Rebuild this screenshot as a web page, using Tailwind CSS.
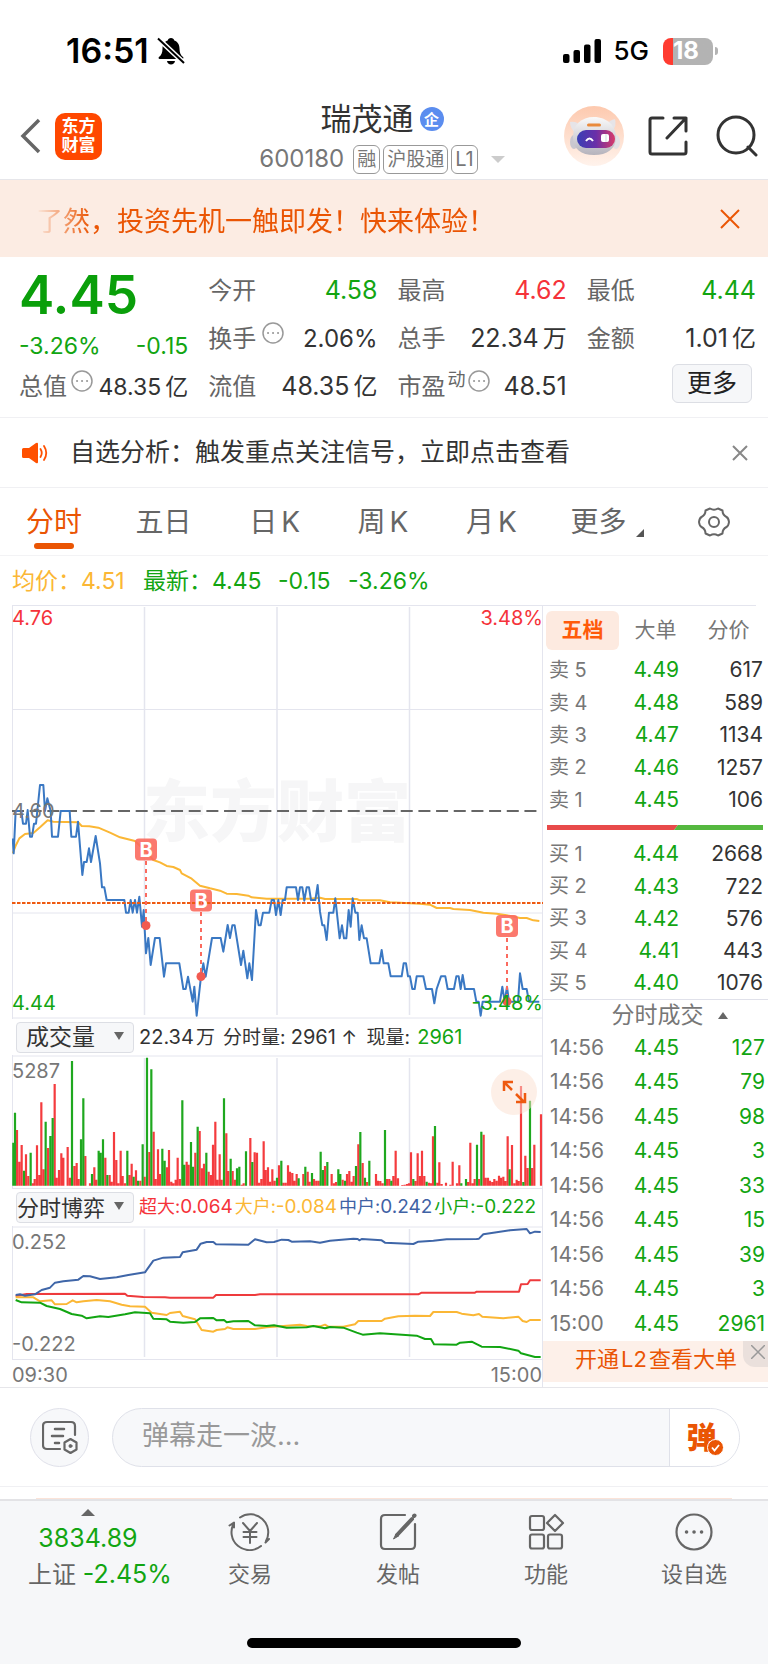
<!DOCTYPE html>
<html lang="zh-CN">
<head>
<meta charset="utf-8">
<meta name="viewport" content="width=device-width, initial-scale=1">
<title>瑞茂通 600180</title>
<script src="https://cdn.jsdelivr.net/npm/@tailwindcss/browser@4"></script>
</head>
<body class="min-h-screen bg-white font-['Inter','Noto_Sans_CJK_SC',sans-serif] text-[#333]">
<div class="flex min-h-screen flex-col">

<!-- status bar -->
<div class="flex h-[100px] items-center justify-between pt-0.5 pr-[50px] pl-[66px] text-black">
  <div class="flex items-center gap-2">
    <span class="text-[34px] leading-none font-semibold">16:51</span>
    <svg class="size-7" viewBox="0 0 28 28" aria-label="静音"><path d="M14 1c1.800 0 3 1 3.300 2.400C21 4.800 22.500 8 22.500 11.500c0 4 1 6.500 3.500 8.500.8.7.5 2-.8 2H2.800c-1.300 0-1.600-1.300-.8-2 2.500-2 3.500-4.500 3.500-8.500C5.500 8 7 4.800 10.700 3.400 11 2 12.200 1 14 1zM10 24h8c-.3 2.200-1.900 3.500-4 3.500S10.300 26.200 10 24z"/><path d="M1 1.500 27 26" stroke="#fff" stroke-width="5"/><path d="M1 1.500 27 26" stroke="#000" stroke-width="2"/></svg>
  </div>
  <div class="flex items-center">
    <svg class="h-6 w-[38px]" viewBox="0 0 38 24" aria-label="信号"><rect y="15" width="6.500" height="9" rx="2"/><rect x="10.500" y="11" width="6.500" height="13" rx="2"/><rect x="21" y="5.500" width="6.500" height="18.500" rx="2"/><rect x="31.500" width="6.500" height="24" rx="2"/></svg>
    <span class="ml-3 text-[26px] leading-none font-medium">5G</span>
    <div class="ml-3.5 flex h-[27px] w-[50px] items-center overflow-hidden rounded-lg bg-linear-to-r from-[#ff3b30] from-20% to-[#b3b3b3] to-20% pl-2.5 text-[24px] font-bold text-white">18</div>
    <div class="ml-0.5 h-2 w-[3px] rounded-r bg-[#b3b3b3]"></div>
  </div>
</div>

<!-- title bar -->
<header class="grid h-20 grid-cols-[1fr_auto_1fr] items-center border-b border-[#e6e6ea]">
  <div class="flex items-center gap-3.5 pb-2 pl-5">
    <button aria-label="返回"><svg class="h-9 w-[21px]" viewBox="0 0 21 36" fill="none" stroke="#666" stroke-width="3.500"><path d="M19 2 3 18l16 16"/></svg></button>
    <a href="#" class="flex size-[47px] flex-col items-center justify-center rounded-[10px] bg-[#ff4800] text-[17px] leading-[19px] font-bold text-white"><span>东方</span><span>财富</span></a>
  </div>
  <div class="flex flex-col items-center pr-1">
    <div class="flex items-center gap-1.5"><h1 class="text-[31px] leading-[38px]">瑞茂通</h1><span class="flex size-6 items-center justify-center rounded-full bg-[#5b8def] text-[15px] leading-none font-bold text-white">企</span></div>
    <div class="flex h-[42px] items-center gap-[3px] text-[#777]">
      <span class="mr-1.5 text-[24px]">600180</span>
      <span class="rounded-md border border-[#999] px-[3px] text-[19px] leading-[27px]">融</span>
      <span class="rounded-md border border-[#999] px-[3px] text-[19px] leading-[27px]">沪股通</span>
      <span class="rounded-md border border-[#999] px-[3px] text-[20px] leading-[27px]">L1</span>
      <svg class="ml-2.5 h-[7px] w-3.5" viewBox="0 0 14 7"><path d="M0 0h14L7 7z" fill="#ccc"/></svg>
    </div>
  </div>
  <div class="flex items-center justify-end pr-2.5 pb-2">
    <button class="mr-6" aria-label="智能助手"><svg class="size-[60px]" viewBox="0 0 60 60">
      <defs><linearGradient id="halo" x1="0" y1="0" x2="0" y2="1"><stop offset="0" stop-color="#fdc9ae"/><stop offset="1" stop-color="#fff3ec"/></linearGradient><linearGradient id="visor"><stop offset="0" stop-color="#3a3fb5"/><stop offset=".5" stop-color="#6a2fa8"/><stop offset="1" stop-color="#d83a6a"/></linearGradient><linearGradient id="shell" x1="0" y1="0" x2="0" y2="1"><stop offset="0" stop-color="#fafafa"/><stop offset="1" stop-color="#b5b3bc"/></linearGradient></defs>
      <circle cx="30" cy="30" r="30" fill="url(#halo)"/><path d="M6 16q5-1 9 2l-3 9q-6-4-6-11zM51 13q-5 1-8 5l5 7q5-5 3-12z" fill="#e6e4e8"/><ellipse cx="10" cy="36" rx="4" ry="7" fill="#c9c7cf"/><ellipse cx="52" cy="36" rx="4" ry="7" fill="#e3e0e5"/><path d="M30 11c13 0 22 9 22 20 0 12-9 18-22 18S9 43 9 31s8-20 21-20z" fill="url(#shell)"/><rect x="23" y="17.500" width="14" height="3" rx="1.500" fill="#e98a3c"/><rect x="13" y="24" width="38" height="18" rx="9" fill="url(#visor)"/><path d="M22 35q3.500-5 7 0" fill="none" stroke="#fff" stroke-width="2"/><rect x="37" y="28" width="8" height="8" rx="2" fill="#fff"/><path d="M42 28v8" stroke="#cdd" stroke-width="1"/></svg></button>
    <button class="mr-7" aria-label="分享"><svg class="size-10" viewBox="0 0 40 40" fill="none" stroke="#333" stroke-width="3" stroke-linecap="round" stroke-linejoin="round"><path d="M15 2H4Q2 2 2 4v32q0 2 2 2h32q2 0 2-2V26M26 2h12v13M38 2 19 22"/></svg></button>
    <button aria-label="搜索"><svg class="size-[42px]" viewBox="0 0 42 42" fill="none" stroke="#333" stroke-width="3" stroke-linecap="round"><circle cx="20" cy="20" r="18"/><path d="m32 32 8 8"/></svg></button>
  </div>
</header>

<!-- promo banner -->
<div class="flex h-[77px] items-center justify-between bg-[#fcece3] pr-7 pl-9 text-[#ea5504]">
  <p class="pt-2 text-[27px] [mask-image:linear-gradient(to_right,transparent,black_54px)]">了然，投资先机一触即发！快来体验！</p>
  <button aria-label="关闭"><svg class="size-5" viewBox="0 0 20 20" fill="none" stroke="currentColor" stroke-width="2"><path d="m1 1 18 18M19 1 1 19"/></svg></button>
</div>

<!-- quote summary -->
<section class="grid h-[161px] grid-cols-4 gap-x-5 border-b border-[#f0f0f3] pt-2.5 pr-3 pl-[19px] text-[24px] text-[#666]">
  <div class="flex flex-col">
    <div class="h-14 text-[53px] leading-14 font-semibold text-[#0a9f0a]">4.45</div>
    <div class="flex h-[46px] items-center justify-between text-[23px] text-[#12a512]"><span>-3.26%</span><span>-0.15</span></div>
    <div class="flex h-9 items-center"><span>总值</span><svg class="mb-3 ml-1 size-[22px] shrink-0" viewBox="0 0 22 22" fill="none" stroke="#999" stroke-width="1.500"><circle cx="11" cy="11" r="10"/><path d="M6 11h.1M11 11h.1M16 11h.1" stroke-width="2" stroke-linecap="round"/></svg><span class="ml-auto text-[23px] whitespace-nowrap text-[#333]">48.35<span class="ml-1">亿</span></span></div>
  </div>
  <div class="flex flex-col">
    <div class="flex h-12 items-center justify-between"><span>今开</span><span class="text-[25px] text-[#12a512]">4.58</span></div>
    <div class="flex h-12 items-center"><span>换手</span><svg class="mb-3 ml-1.5 size-[22px]" viewBox="0 0 22 22" fill="none" stroke="#999" stroke-width="1.500"><circle cx="11" cy="11" r="10"/><path d="M6 11h.1M11 11h.1M16 11h.1" stroke-width="2" stroke-linecap="round"/></svg><span class="ml-auto text-[#333]">2.06%</span></div>
    <div class="flex h-12 items-center justify-between"><span>流值</span><span class="text-[25px] text-[#333]">48.35<span class="ml-1 text-[24px]">亿</span></span></div>
  </div>
  <div class="flex flex-col">
    <div class="flex h-12 items-center justify-between"><span>最高</span><span class="text-[25px] text-[#f5333a]">4.62</span></div>
    <div class="flex h-12 items-center justify-between"><span>总手</span><span class="text-[25px] text-[#333]">22.34<span class="ml-1 text-[24px]">万</span></span></div>
    <div class="flex h-12 items-center"><span>市盈</span><span class="mb-4 ml-0.5 text-[18px]">动</span><svg class="mb-3 ml-0.5 size-[22px]" viewBox="0 0 22 22" fill="none" stroke="#999" stroke-width="1.500"><circle cx="11" cy="11" r="10"/><path d="M6 11h.1M11 11h.1M16 11h.1" stroke-width="2" stroke-linecap="round"/></svg><span class="ml-auto text-[25px] text-[#333]">48.51</span></div>
  </div>
  <div class="flex flex-col">
    <div class="flex h-12 items-center justify-between"><span>最低</span><span class="text-[25px] text-[#12a512]">4.44</span></div>
    <div class="flex h-12 items-center justify-between"><span>金额</span><span class="text-[25px] text-[#333]">1.01<span class="ml-1 text-[24px]">亿</span></span></div>
    <button class="mt-px mr-1 h-[39px] w-20 self-end rounded-md border border-[#dcdee4] bg-[#f6f7f9] text-[25px] leading-none text-[#222]">更多</button>
  </div>
</section>

<!-- analysis hint -->
<div class="flex h-[70px] items-center border-b border-[#f0f0f3] pr-5 pl-[22px]">
  <svg class="h-[22px] w-[26px]" viewBox="0 0 26 22" aria-hidden="true"><path d="M1.500 6H7l7-5q2-1 2 1v18q0 2-2 1l-7-5H1.500Q0 16 0 14.500v-7Q0 6 1.500 6z" fill="#ff5000"/><path d="M18.500 7q2.500 4 0 8M22 4q4.500 7 0 14" fill="none" stroke="#ff5000" stroke-width="1.800" stroke-linecap="round"/></svg>
  <p class="ml-[22px] text-[25px]">自选分析：触发重点关注信号，立即点击查看</p>
  <button class="ml-auto" aria-label="关闭"><svg class="size-4" viewBox="0 0 16 16" fill="none" stroke="#888" stroke-width="2"><path d="m1 1 14 14M15 1 1 15"/></svg></button>
</div>

<!-- period tabs -->
<nav class="flex h-[68px] items-center justify-between border-b border-[#f3f3f5] pr-[38px] pl-[26px] text-[28px] text-[#666]">
  <button class="relative text-[#ea5504]">分时<span class="absolute inset-x-2 -bottom-1.5 h-1.5 rounded-full bg-[#ea5504]"></span></button>
  <button>五日</button>
  <button class="ml-1">日<span class="ml-1">K</span></button>
  <button class="ml-1">周<span class="ml-1">K</span></button>
  <button class="ml-1">月<span class="ml-1">K</span></button>
  <button class="flex items-end gap-2.5">更多<svg class="mb-1.5 size-2" viewBox="0 0 8 8"><path d="M8 0v8H0z" fill="#555"/></svg></button>
  <button aria-label="设置"><svg class="size-8" viewBox="0 0 32 32" fill="none" stroke="#666" stroke-width="2" stroke-linejoin="round"><path d="M12 2.500q4 2.500 8 0l4.500 2q0 4.500 4 6.500 2 1 2.500 5-.5 4-2.500 5-4 2-4 6.500l-4.500 2q-4-2.500-8 0l-4.500-2q0-4.500-4-6.500Q1.500 20 1 16q.5-4 2.500-5 4-2 4-6.500z"/><circle cx="16" cy="16" r="5"/></svg></button>
</nav>

<!-- average / latest -->
<div class="flex h-[49px] items-center pt-0.5 pl-3 text-[23px] whitespace-pre">
  <span class="w-[131px] text-[#fbb735]">均价：4.51</span>
  <span class="w-[135px] text-[#12a512]">最新：4.45</span>
  <span class="w-[70px] text-[#12a512]">-0.15</span>
  <span class="text-[#12a512]">-3.26%</span>
</div>

<!-- charts and order book -->
<main class="flex border-b border-[#e6e6ea] pl-3 text-[20px] text-[#777]">
  <div class="flex min-w-0 flex-1 flex-col">

    <div class="relative leading-none">
      <svg class="block w-full" viewBox="0 0 531 414" fill="none" role="img" aria-label="分时走势">
        <text x="131" y="231" font-size="67" font-weight="900" fill="#f6f6f7">东方财富</text>
        <path d="M0 .5H531M0 104.500H531M0 308H531M0 413H531M.5 0V414M530.500 0V414" stroke="#e4e5ee"/>
        <path d="M132.500 2V410M265 2V410M397.500 2V410" stroke="#e4e5ee" stroke-width="1.500"/>
        <path d="M0 206H529" stroke="#666" stroke-width="2" stroke-dasharray="12 5.670"/>
        <g transform="translate(-12 125) scale(.33333)" stroke-linejoin="round">
          <path stroke="#fbb735" stroke-width="6" d="M38 370 48 345 58 325 75 312 100 309 120 292 143 271 160 275 235 277 245 288 268 289 295 293 330 308 360 322 405 333 435 362 460 390 480 397 500 408 520 411 540 420 545 430 575 446 600 467 630 475 660 482 680 491 710 492 745 497 755 502 800 506 930 506 960 503 975 507 1070 507 1080 511 1140 511 1170 517 1260 521 1290 524 1310 534 1350 534 1360 537 1410 540 1450 548 1490 551 1520 556 1560 564 1580 564 1600 571 1618 573"/>
          <path stroke="#3a78c3" stroke-width="6" d="M38 325 41 370 47 243 64 243 69 281 78 281 83 240 90 320 96 320 102 281 108 281 120 165 130 165 135 243 142 205 152 243 156 320 174 320 182 243 209 243 214 320 228 320 234 275 247 435 252 396 260 396 267 355 273 396 287 318 300 400 306 472 313 472 320 510 373 510 378 548 386 548 392 510 398 548 405 510 411 548 418 500 426 590 431 540 438 670 445 624 452 705 465 624 479 624 492 740 498 700 538 700 550 777 557 777 564 740 578 815 583 770 590 857 603 740 610 700 617 740 636 624 662 624 670 665 683 585 690 624 697 586 704 586 723 705 730 662 742 745 748 700 756 750 768 540 776 586 782 586 789 548 808 548 815 510 822 510 828 555 835 510 842 555 848 510 855 510 860 472 888 472 894 510 900 472 907 472 913 512 920 472 927 472 933 510 946 510 953 465 960 545 967 586 973 586 980 630 987 548 1000 548 1006 505 1019 625 1026 586 1032 625 1039 625 1046 540 1052 590 1058 505 1066 548 1073 548 1078 630 1085 586 1092 625 1100 625 1112 700 1138 700 1145 660 1151 700 1165 700 1172 739 1205 739 1211 700 1218 700 1224 739 1230 739 1237 777 1244 777 1250 739 1270 739 1278 777 1296 777 1303 820 1310 777 1323 739 1336 739 1343 777 1362 777 1369 739 1376 739 1382 777 1388 735 1395 777 1422 777 1429 815 1436 815 1442 857 1448 815 1500 815 1507 770 1514 815 1521 770 1527 815 1554 815 1560 730 1568 777 1580 777 1587 815 1618 815"/>
        </g>
        <g fill="#fb6a5e" fill-opacity=".9" stroke="none"><rect x="123" y="233.500" width="22" height="22" rx="4"/><rect x="178" y="284.500" width="22" height="22" rx="4"/><rect x="484" y="310" width="22" height="22" rx="4"/></g>
        <path d="M0 298H531" stroke="#ee5a10" stroke-width="2" stroke-dasharray="3.500 1.500"/>
        <path d="M134 256V320M189 307V371M495 333V396" stroke="#fb6a5e" stroke-width="2" stroke-dasharray="4 4"/>
        <g fill="#f25a50"><circle cx="134" cy="320.500" r="4.500"/><circle cx="189" cy="371.500" r="4.500"/><circle cx="495" cy="396.500" r="4.500"/></g>
        <g fill="#fff" font-size="20" font-weight="700" text-anchor="middle"><text x="134" y="252">B</text><text x="189" y="303">B</text><text x="495" y="328">B</text></g>
      </svg>
      <span class="absolute top-[3px] left-0 text-[#f5333a]">4.76</span>
      <span class="absolute top-[3px] right-0 text-[#f5333a]">3.48%</span>
      <span class="absolute top-[47%] left-0 mt-px">4.60</span>
      <span class="absolute bottom-1.5 left-0 text-[#12a512]">4.44</span>
      <span class="absolute right-0 bottom-1.5 text-[#12a512]">-3.48%</span>
    </div>

    <div class="flex h-9 items-center border-r border-[#e4e5ee] pl-1 whitespace-nowrap text-[#333]">
      <div class="relative">
        <select aria-label="副图指标一" class="block h-[31px] w-[118px] appearance-none rounded border border-[#dcdee4] bg-[#f6f7f9] pl-[9px] text-[23px] leading-none"><option>成交量</option></select>
        <svg class="pointer-events-none absolute top-2.5 right-2.5 h-2 w-2.5" viewBox="0 0 10 8"><path d="M0 0h10L5 8z" fill="#666"/></svg>
      </div>
      <p class="ml-[5px] text-[19px]"><span class="text-[20px]">22.34</span><span class="ml-0.5">万</span><span class="ml-2">分时量:</span> <span class="text-[20px]">2961</span> ↑ <span class="ml-1">现量:</span> <span class="ml-0.5 text-[20px] text-[#12a512]">2961</span></p>
    </div>

    <div class="relative leading-none">
      <svg class="block w-full" viewBox="0 0 531 134" fill="none" role="img" aria-label="成交量">
        <path d="M0 1H531M0 133.500H531M.5 0V134M530.500 0V134" stroke="#e4e5ee"/>
        <path d="M132.500 3V131M265 3V131M397.500 3V131" stroke="#e4e5ee" stroke-width="1.500"/>
        <g transform="translate(-12 -45) scale(.33333)" stroke-width="6.600">
          <path stroke="#f43b3e" d="M51 527V360M58 527V455M65 527V405M78 527V433M85 527V498M98 527V520M104 527V507M111 527V406M118 527V495M124 527V277M131 527V478M144 527V414M164 527V222M170 527V503M177 527V480M184 527V430M190 527V443M203 527V411M210 527V503M223 527V468M230 527V459M236 527V507M256 527V438M270 527V520M283 527V472M289 527V509M316 527V443M329 527V495M335 527V515M342 527V366M349 527V450M355 527V520M362 527V422M368 527V498M375 527V520M388 527V495M395 527V461M408 527V481M421 527V512M434 527V500M448 527V426M461 527V365M467 527V507M474 527V418M480 527V492M501 527V472M507 527V420M514 527V515M520 527V520M527 527V509M533 527V443M540 527V507M560 527V455M566 527V464M586 527V428M599 527V363M606 527V475M612 527V461M626 527V485M633 527V495M639 527V404M646 527V335M652 527V509M659 527V433M665 527V509M679 527V370M685 527V483M698 527V483M705 527V509M725 527V524M731 527V520M751 527V384M764 527V427M771 527V428M777 527V518M784 527V507M791 527V394M797 527V480M804 527V472M810 527V515M817 527V478M824 527V512M837 527V466M850 527V518M857 527V518M864 527V466M870 527V485M877 527V489M883 527V512M890 527V492M910 527V492M923 527V485M929 527V515M942 527V507M949 527V512M956 527V512M975 527V468M995 527V492M1002 527V520M1008 527V516M1028 527V509M1041 527V492M1048 527V483M1055 527V515M1061 527V498M1075 527V403M1088 527V459M1101 527V516M1128 527V492M1134 527V512M1141 527V513M1148 527V520M1161 527V507M1168 527V507M1180 527V498M1187 527V422M1194 527V505M1207 527V525M1214 527V524M1221 527V522M1227 527V520M1233 527V427M1246 527V513M1253 527V430M1260 527V498M1266 527V422M1273 527V498M1287 527V518M1293 527V520M1299 527V379M1312 527V518M1318 527V457M1325 527V522M1338 527V518M1351 527V524M1358 527V455M1371 527V520M1378 527V466M1404 527V516M1411 527V398M1418 527V520M1424 527V507M1437 527V507M1451 527V374M1457 527V503M1464 527V503M1470 527V512M1477 527V516M1483 527V507M1490 527V512M1497 527V497M1503 527V503M1510 527V500M1516 527V513M1523 527V379M1536 527V405M1543 527V520M1550 527V509M1556 527V513M1563 527V228M1576 527V437M1583 527V474M1596 527V474M1603 527V404M1623 527V313"/>
          <path stroke="#1fa81f" d="M40 527V398M45 527V308M72 527V482M92 527V428M137 527V335M151 527V378M158 527V324M216 527V153M243 527V388M250 527V265M276 527V492M296 527V422M302 527V428M309 527V388M322 527V495M382 527V422M401 527V500M414 527V512M428 527V403M441 527V143M454 527V178M487 527V416M494 527V452M547 527V271M553 527V464M573 527V396M579 527V470M593 527V350M619 527V428M672 527V265M692 527V446M711 527V475M718 527V470M738 527V424M757 527V456M831 527V503M844 527V452M896 527V505M916 527V470M936 527V489M962 527V425M969 527V480M982 527V456M1015 527V478M1021 527V492M1035 527V512M1068 527V468M1081 527V366M1095 527V503M1108 527V452M1155 527V360M1174 527V512M1240 527V507M1280 527V515M1305 527V348M1384 527V520M1398 527V507M1431 527V404M1444 527V365M1529 527V478M1570 527V516M1590 527V272"/>
        </g>
      </svg>
      <span class="absolute top-1.5 left-0">5287</span>
      <button class="absolute top-3.5 right-1.5 size-[46px] rounded-full bg-[#fbdfd0]/50" aria-label="放大"><svg class="size-[46px]" viewBox="0 0 46 46" fill="none" stroke="#ee5a10" stroke-width="2.500"><path d="M13 22V13h9M13 13l8 8M34 24v9h-9M33 33l-8-8"/></svg></button>
    </div>

    <div class="flex h-[37px] items-center border-r border-[#e4e5ee] pl-1 whitespace-nowrap">
      <div class="relative">
        <select aria-label="副图指标二" class="block h-[31px] w-[118px] appearance-none rounded border border-[#dcdee4] bg-[#f6f7f9] text-[22px] leading-none text-[#333]"><option>分时博弈</option></select>
        <svg class="pointer-events-none absolute top-2.5 right-2.5 h-2 w-2.5" viewBox="0 0 10 8"><path d="M0 0h10L5 8z" fill="#666"/></svg>
      </div>
      <p class="ml-[5px] flex flex-1 justify-between pr-1.5 text-[18px]"><span class="text-[#f5333a]">超大:<span class="text-[19px]">0.064</span></span><span class="text-[#fbb735]">大户:<span class="text-[19px]">-0.084</span></span><span class="text-[#3f62a5]">中户:<span class="text-[19px]">0.242</span></span><span class="text-[#12a512]">小户:<span class="text-[19px]">-0.222</span></span></p>
    </div>

    <div class="relative leading-none">
      <svg class="block w-full" viewBox="0 0 531 134" fill="none" role="img" aria-label="分时博弈">
        <path d="M0 1H531M0 133.500H531M.5 0V134M530.500 0V134" stroke="#e4e5ee"/>
        <path d="M132.500 3V131M265 3V131M397.500 3V131" stroke="#e4e5ee" stroke-width="1.500"/>
        <g transform="translate(-12 -216) scale(.33333)" stroke-width="6" stroke-linejoin="round">
          <path stroke="#ee3a3c" d="M47 858 80 852 375 851 382 857 430 861 495 862 510 863 640 863 648 855 765 855 780 853 1255 853 1265 848 1425 848 1430 845 1557 845 1563 823 1583 822 1590 811 1622 811"/>
          <path stroke="#fbb735" d="M47 862 100 862 120 874 155 871 165 883 200 882 218 871 230 877 250 874 290 870 330 874 365 884 390 889 435 890 455 908 500 915 510 909 540 905 548 918 585 928 605 960 640 965 650 960 675 957 682 952 700 957 765 957 800 952 850 948 900 944 920 948 960 949 975 944 985 950 1030 950 1065 943 1075 933 1145 933 1155 926 1195 919 1245 917 1290 918 1300 906 1370 906 1385 911 1420 916 1437 912 1447 920 1510 925 1555 920 1568 933 1580 936 1590 930 1622 930"/>
          <path stroke="#12a512" d="M47 870 65 877 120 878 140 888 180 897 215 912 245 917 260 925 300 919 325 921 375 913 405 907 450 910 460 926 500 928 510 935 550 938 585 936 600 925 640 924 650 931 672 930 680 937 700 934 745 933 765 946 800 948 822 946 860 953 920 952 940 948 975 955 990 951 1030 953 1070 968 1088 974 1140 970 1250 977 1275 987 1293 987 1302 1003 1370 1004 1380 998 1415 995 1445 1010 1500 1011 1555 1022 1563 1030 1605 1041 1622 1041"/>
          <path stroke="#3f66a8" d="M47 855 60 853 75 857 105 853 125 840 150 833 165 818 190 814 235 809 250 798 270 799 300 807 350 802 385 795 435 787 460 752 490 743 540 741 548 727 590 719 602 701 620 696 640 696 648 703 745 704 765 688 800 697 822 696 845 689 865 690 875 695 930 694 960 698 990 692 1060 686 1073 687 1078 691 1085 687 1145 691 1155 698 1240 702 1255 695 1300 692 1340 688 1430 687 1437 686 1450 673 1530 661 1580 657 1590 670 1605 665 1622 666"/>
        </g>
      </svg>
      <span class="absolute top-1.5 left-0">0.252</span>
      <span class="absolute bottom-1.5 left-0">-0.222</span>
    </div>

    <div class="flex h-[27px] items-center justify-between border-r border-[#e4e5ee] pt-[3px]"><span>09:30</span><span>15:00</span></div>
  </div>

  <!-- order book -->
  <aside class="flex w-[225px] flex-col text-[21px]">
    <div class="mr-3 flex h-[49px] items-center border-t border-[#e4e5ee] pl-[3px]">
      <button class="h-[39px] w-[73px] shrink-0 rounded-md bg-[#fdeae0] font-bold text-[#ff5a0a]">五档</button>
      <button class="w-[73px] shrink-0 text-center">大单</button>
      <button class="w-[73px] shrink-0 text-center">分价</button>
    </div>
    <table class="h-[162px] w-full table-fixed">
      <tbody>
        <tr><th scope="row" class="w-[66px] pl-1.5 text-left text-[20px] font-normal">卖 5</th><td class="pr-px text-right text-[#12a512]">4.49</td><td class="w-[88px] pr-[5px] text-right text-[#333]">617</td></tr>
        <tr><th scope="row" class="pl-1.5 text-left text-[20px] font-normal">卖 4</th><td class="pr-px text-right text-[#12a512]">4.48</td><td class="pr-[5px] text-right text-[#333]">589</td></tr>
        <tr><th scope="row" class="pl-1.5 text-left text-[20px] font-normal">卖 3</th><td class="pr-px text-right text-[#12a512]">4.47</td><td class="pr-[5px] text-right text-[#333]">1134</td></tr>
        <tr><th scope="row" class="pl-1.5 text-left text-[20px] font-normal">卖 2</th><td class="pr-px text-right text-[#12a512]">4.46</td><td class="pr-[5px] text-right text-[#333]">1257</td></tr>
        <tr><th scope="row" class="pl-1.5 text-left text-[20px] font-normal">卖 1</th><td class="pr-px text-right text-[#12a512]">4.45</td><td class="pr-[5px] text-right text-[#333]">106</td></tr>
      </tbody>
    </table>
    <svg class="mt-[9px] mb-2 ml-1 h-[5px] w-[216px]" viewBox="0 0 216 5"><path d="M0 0h131l-4 5H0z" fill="#e84a4a"/><path d="M131 0h85v5h-89z" fill="#55b83f"/></svg>
    <table class="h-[161px] w-full table-fixed">
      <tbody>
        <tr><th scope="row" class="w-[66px] pl-1.5 text-left text-[20px] font-normal">买 1</th><td class="pr-px text-right text-[#12a512]">4.44</td><td class="w-[88px] pr-[5px] text-right text-[#333]">2668</td></tr>
        <tr><th scope="row" class="pl-1.5 text-left text-[20px] font-normal">买 2</th><td class="pr-px text-right text-[#12a512]">4.43</td><td class="pr-[5px] text-right text-[#333]">722</td></tr>
        <tr><th scope="row" class="pl-1.5 text-left text-[20px] font-normal">买 3</th><td class="pr-px text-right text-[#12a512]">4.42</td><td class="pr-[5px] text-right text-[#333]">576</td></tr>
        <tr><th scope="row" class="pl-1.5 text-left text-[20px] font-normal">买 4</th><td class="pr-px text-right text-[#12a512]">4.41</td><td class="pr-[5px] text-right text-[#333]">443</td></tr>
        <tr><th scope="row" class="pl-1.5 text-left text-[20px] font-normal">买 5</th><td class="pr-px text-right text-[#12a512]">4.40</td><td class="pr-[5px] text-right text-[#333]">1076</td></tr>
      </tbody>
    </table>
    <button class="flex h-[31px] items-center justify-center gap-3.5 border-t border-[#e0e1ea] pr-1 pl-8 text-[23px] leading-none"><span>分时成交</span><svg class="h-[7px] w-2.5" viewBox="0 0 10 7"><path d="M5 0l5 7H0z" fill="#666"/></svg></button>
    <table class="h-[311px] w-full table-fixed">
      <tbody>
        <tr><td class="w-[70px] pl-[7px]">14:56</td><td class="pr-px text-right text-[#12a512]">4.45</td><td class="w-[88px] pr-[3px] text-right text-[#12a512]">127</td></tr>
        <tr><td class="pl-[7px]">14:56</td><td class="pr-px text-right text-[#12a512]">4.45</td><td class="pr-[3px] text-right text-[#12a512]">79</td></tr>
        <tr><td class="pl-[7px]">14:56</td><td class="pr-px text-right text-[#12a512]">4.45</td><td class="pr-[3px] text-right text-[#12a512]">98</td></tr>
        <tr><td class="pl-[7px]">14:56</td><td class="pr-px text-right text-[#12a512]">4.45</td><td class="pr-[3px] text-right text-[#12a512]">3</td></tr>
        <tr><td class="pl-[7px]">14:56</td><td class="pr-px text-right text-[#12a512]">4.45</td><td class="pr-[3px] text-right text-[#12a512]">33</td></tr>
        <tr><td class="pl-[7px]">14:56</td><td class="pr-px text-right text-[#12a512]">4.45</td><td class="pr-[3px] text-right text-[#12a512]">15</td></tr>
        <tr><td class="pl-[7px]">14:56</td><td class="pr-px text-right text-[#12a512]">4.45</td><td class="pr-[3px] text-right text-[#12a512]">39</td></tr>
        <tr><td class="pl-[7px]">14:56</td><td class="pr-px text-right text-[#12a512]">4.45</td><td class="pr-[3px] text-right text-[#12a512]">3</td></tr>
        <tr><td class="pl-[7px]">15:00</td><td class="pr-px text-right text-[#12a512]">4.45</td><td class="pr-[3px] text-right text-[#12a512]">2961</td></tr>
      </tbody>
    </table>
    <div class="relative h-[41px] bg-[#fdf0e9]">
      <a href="#" class="block pl-8 text-[22px] leading-[37px] whitespace-nowrap text-[#ea5504]">开通<span class="ml-0.5">L2</span><span class="ml-0.5">查看大单</span></a>
      <button class="absolute top-0 right-0 flex h-[26px] w-[25px] items-center justify-center rounded-bl-xl bg-[#eae0dc] pb-1 pl-1" aria-label="关闭"><svg class="size-3.5" viewBox="0 0 14 14" fill="none" stroke="#999" stroke-width="1.500"><path d="m0 0 14 14M14 0 0 14"/></svg></button>
    </div>
  </aside>
</main>

<!-- comment bar -->
<div class="flex h-[99px] items-center gap-[23px] border-b border-[#f0f0f3] pr-7 pl-[30px]">
  <button class="flex size-[59px] items-center justify-center rounded-full border border-[#e0e1ea] bg-[#f7f8fa]" aria-label="弹幕设置"><svg class="size-9" viewBox="0 0 36 36" fill="none" stroke="#666" stroke-width="2.200" stroke-linecap="round"><path d="M18 30H5q-4 0-4-4V7q0-4 4-4h24q4 0 4 4v9"/><path d="M13 10h9M10 17h11M13 24h4" stroke-width="2.500"/><path d="m28.500 20 6 3.500v7l-6 3.500-6-3.500v-7z" stroke-linejoin="round"/><circle cx="28.500" cy="27" r="1.500" fill="#666" stroke-width="1"/></svg></button>
  <div class="flex h-[59px] flex-1 overflow-hidden rounded-full border border-[#dfe1e9] bg-[#f7f8fa]">
    <input type="text" aria-label="弹幕" placeholder="弹幕走一波..." class="min-w-0 flex-1 bg-transparent pb-0.5 pl-[29px] text-[27px] outline-none placeholder:text-[#999]">
    <button class="relative w-[70px] border-l border-[#dfe1e9] bg-white pr-1.5 text-[30px] leading-none font-black text-[#ea5504]">弹<svg class="absolute right-[15px] bottom-2.5 size-[17px]" viewBox="0 0 17 17"><circle cx="8.500" cy="8.500" r="8" fill="#ea5504" stroke="#fff"/><path d="m5 8.500 2.500 3L12 6" fill="none" stroke="#fff" stroke-width="1.800"/></svg></button>
  </div>
</div>
<div class="mx-9 h-3 border-b border-[#fbe3d8]"></div>

<!-- bottom navigation -->
<footer class="flex flex-1 flex-col border-t-2 border-[#e3e3e6] bg-[#f6f7f9] text-[#666]">
  <div class="flex h-24 text-[22px]">
    <a href="#" class="flex w-[176px] flex-col items-center pt-2">
      <svg class="h-[7px] w-3.5 shrink-0" viewBox="0 0 14 7"><path d="M7 0l7 7H0z" fill="#666"/></svg>
      <span class="mt-1 text-[25px] leading-9 text-[#12a512]">3834.89</span>
      <span class="ml-6 text-[24px] leading-9 whitespace-nowrap">上证 <span class="text-[25px] text-[#12a512]">-2.45%</span></span>
    </a>
    <a href="#" class="flex flex-1 flex-col items-center pt-3"><svg class="h-[38px] w-11 shrink-0" viewBox="0 0 44 38" fill="none" stroke="#666" stroke-width="2" stroke-linecap="round" stroke-linejoin="round"><path d="M12 4.500A18 18 0 0 1 38 28M41 26l-3.500 3.500M33 33A18 18 0 0 1 6 10M1.500 12.500 6 9.500v5M15 10l7 8 7-8M22 18v12M15.500 19h13M15.500 24h13"/></svg><span class="mt-[5px] leading-9">交易</span></a>
    <a href="#" class="flex flex-1 flex-col items-center pt-3"><svg class="size-[38px] shrink-0" viewBox="0 0 38 38" fill="none" stroke="#666" stroke-width="2.200" stroke-linecap="round"><path d="M26 2H6Q2 2 2 6v26q0 4 4 4h26q4 0 4-4V11"/><path d="M33 6 18 22" stroke-width="4"/><path d="m17 21-2.500 5 5-3z" fill="#666" stroke-width="1"/><path d="m35 3 .5-.5" stroke-width="4"/></svg><span class="mt-[5px] leading-9">发帖</span></a>
    <a href="#" class="flex flex-1 flex-col items-center pt-3"><svg class="size-[38px] shrink-0" viewBox="0 0 38 38" fill="none" stroke="#666" stroke-width="2.200" stroke-linejoin="round"><rect x="3" y="3" width="14" height="14" rx="2"/><rect x="3" y="21.500" width="14" height="14" rx="2"/><rect x="21" y="21.500" width="14" height="14" rx="2"/><path d="m28 2 8 8-8 8-8-8z"/></svg><span class="mt-[5px] leading-9">功能</span></a>
    <a href="#" class="flex flex-1 flex-col items-center pt-3"><svg class="size-[38px] shrink-0" viewBox="0 0 38 38" fill="none" stroke="#666" stroke-width="2.200" stroke-linecap="round"><circle cx="19" cy="19" r="17.500"/><path d="M11.500 19h.1M19 19h.1M26.500 19h.1" stroke-width="3.500"/></svg><span class="mt-[5px] leading-9">设自选</span></a>
  </div>
  <div class="mx-auto mt-auto mb-4 h-2.5 w-[274px] rounded-full bg-black"></div>
</footer>
</div>
</body>
</html>
